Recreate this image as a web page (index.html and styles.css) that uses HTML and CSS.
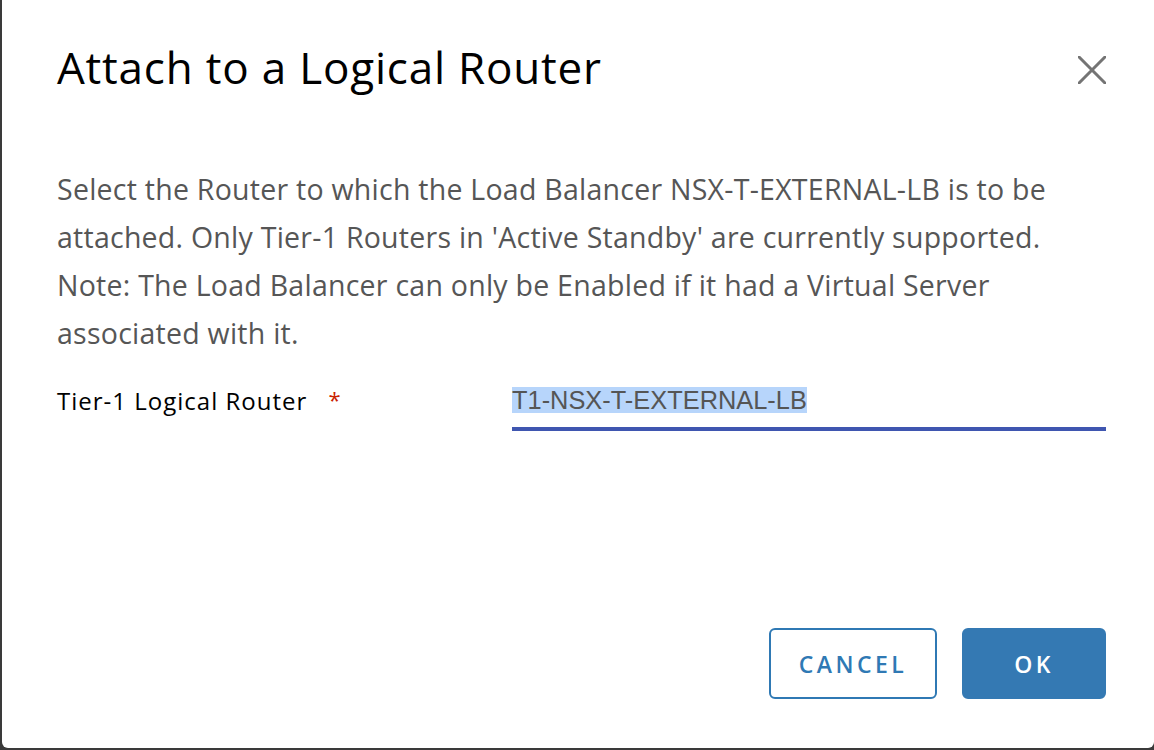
FILE: index.html
```html
<!DOCTYPE html>
<html>
<head>
<meta charset="utf-8">
<link rel="stylesheet" href="styles.css">
</head>
<body>
<div class="modal">
  <header class="modal-header">
    <h3 class="modal-title">Attach to a Logical Router</h3>
    <button class="close" aria-label="Close">
      <svg width="28" height="28" viewBox="0 0 28 28"><path d="M1 1 L27 27 M27 1 L1 27" stroke="#747474" stroke-width="3" stroke-linecap="round" fill="none"/></svg>
    </button>
  </header>
  <div class="modal-body">
    <p class="desc">Select the Router to which the Load Balancer NSX-T-EXTERNAL-LB is to be<br>attached. Only Tier-1 Routers in 'Active Standby' are currently supported.<br>Note: The Load Balancer can only be Enabled if it had a Virtual Server<br>associated with it.</p>
    <div class="form-row">
      <label class="form-label">Tier-1 Logical Router <span class="req">*</span></label>
      <div class="input"><span class="input-text">T1-NSX-T-EXTERNAL-LB</span></div>
    </div>
  </div>
  <footer class="modal-footer">
    <button class="btn btn-outline">CANCEL</button>
    <button class="btn btn-primary">OK</button>
  </footer>
</div>
</body>
</html>
```

FILE: styles.css
```css
html, body {
  margin: 0;
  padding: 0;
  height: 100%;
}
body {
  background: #3a3a3a;
  font-family: "Open Sans", "Noto Sans", sans-serif;
}
.modal {
  margin-left: 2px;
  width: 1152px;
  height: 748px;
  background: #fff;
  border-radius: 0 0 6px 6px;
  display: flex;
  flex-direction: column;
  box-sizing: border-box;
  padding: 0 48px 49px 55px;
}
.modal-header {
  display: flex;
  align-items: flex-start;
  justify-content: space-between;
  padding-top: 39px;
}
.modal-title {
  margin: 0;
  font-weight: 400;
  font-size: 44px;
  line-height: 56px;
  letter-spacing: 0.8px;
  color: #000;
}
.close {
  border: 0;
  background: none;
  padding: 0;
  margin: 17px 0 0 0;
  width: 28px;
  height: 28px;
  display: flex;
  cursor: pointer;
}
.modal-body {
  padding-top: 70px;
}
.desc {
  margin: 0;
  font-size: 28.5px;
  line-height: 48px;
  letter-spacing: 0.25px;
  color: #565656;
}
.form-row {
  display: flex;
  align-items: flex-start;
  margin-top: 18px;
}
.form-label {
  width: 455px;
  font-size: 24px;
  line-height: 48px;
  letter-spacing: 1px;
  color: #000;
}
.req {
  color: #c92100;
  margin-left: 14px;
  font-size: 22px;
  vertical-align: 2px;
}
.input {
  flex: 1;
  border-bottom: 4px solid #3f56b0;
  padding: 12px 0 13px;
}
.input-text {
  font-family: "Liberation Sans", Arial, sans-serif;
  font-size: 25.4px;
  line-height: 26px;
  color: #555;
  background: #b7d5fb;
  display: inline-block;
}
.modal-footer {
  margin-top: auto;
  display: flex;
  justify-content: flex-end;
  gap: 25px;
}
.btn {
  height: 71px;
  border-radius: 6px;
  font-family: "Open Sans", "Noto Sans", sans-serif;
  font-size: 23px;
  font-weight: 600;
  letter-spacing: 0.15em;
  box-sizing: border-box;
  cursor: pointer;
}
.btn-outline {
  width: 168px;
  background: #fff;
  border: 2px solid #2f79b4;
  color: #2f79b4;
}
.btn-primary {
  width: 144px;
  background: #3479b3;
  border: 2px solid #3479b3;
  color: #fff;
}
```
